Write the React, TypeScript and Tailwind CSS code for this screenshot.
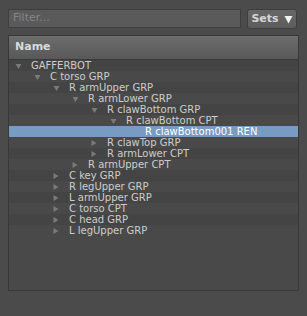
import React from "react";

type Node = { label: string; depth: number; arrow: "open" | "closed" | "none"; selected?: boolean };

const nodes: Node[] = [
  { label: "GAFFERBOT", depth: 0, arrow: "open" },
  { label: "C torso GRP", depth: 1, arrow: "open" },
  { label: "R armUpper GRP", depth: 2, arrow: "open" },
  { label: "R armLower GRP", depth: 3, arrow: "open" },
  { label: "R clawBottom GRP", depth: 4, arrow: "open" },
  { label: "R clawBottom CPT", depth: 5, arrow: "open" },
  { label: "R clawBottom001 REN", depth: 6, arrow: "none", selected: true },
  { label: "R clawTop GRP", depth: 4, arrow: "closed" },
  { label: "R armLower CPT", depth: 4, arrow: "closed" },
  { label: "R armUpper CPT", depth: 3, arrow: "closed" },
  { label: "C key GRP", depth: 2, arrow: "closed" },
  { label: "R legUpper GRP", depth: 2, arrow: "closed" },
  { label: "L armUpper GRP", depth: 2, arrow: "closed" },
  { label: "C torso CPT", depth: 2, arrow: "closed" },
  { label: "C head GRP", depth: 2, arrow: "closed" },
  { label: "L legUpper GRP", depth: 2, arrow: "closed" },
];

const Arrow = ({ kind }: { kind: Node["arrow"] }) => {
  if (kind === "none") return <span className="w-[14px] shrink-0" />;
  return (
    <span className="w-[14px] shrink-0 flex items-center">
      <svg width="8" height="8" viewBox="0 0 8 8" className="-ml-[2px]">
        {kind === "open" ? (
          <polygon points="0.5,2 6.5,2 3.5,7" fill="#7a7a7a" />
        ) : (
          <polygon points="0.5,1 5.5,4 0.5,7" fill="#7a7a7a" />
        )}
      </svg>
    </span>
  );
};

export default function App() {
  return (
    <div
      className="w-[307px] h-[316px] bg-[#4b4b4b] pt-[9px] px-[8px] text-[10px] text-[#cdcdcd]"
      style={{ fontFamily: '"DejaVu Sans", sans-serif' }}
    >
      <div className="flex gap-[6px] h-[20px]">
        <div className="w-[233px] h-[19px] bg-[#5a5a5a] border border-[#3e3e3e] flex items-center pl-[4px] text-[11px] text-[#858585]">
          Filter...
        </div>
        <div className="w-[50px] h-[20px] rounded-[3px] border border-[#3e3e3e] bg-gradient-to-b from-[#676767] to-[#5c5c5c] flex items-center justify-center gap-[5px] font-bold text-[11px] text-[#d6d6d6]">
          Sets
          <svg width="9" height="9" viewBox="0 0 9 9">
            <polygon points="0.5,1 8.5,1 4.5,8.5" fill="#f2f2f2" />
          </svg>
        </div>
      </div>
      <div className="mt-[6px] w-[291px] h-[256px] border border-[#383838] bg-[#494949] flex flex-col overflow-hidden">
        <div className="h-[24px] shrink-0 bg-gradient-to-b from-[#6d6d6d] to-[#585858] border-b border-[#3a3a3a] flex items-center pl-[6px] font-bold text-[11px] text-[#dadada]">
          Name
        </div>
        <div className="flex flex-col">
          {nodes.map((n, i) => (
            <div
              key={i}
              className={`h-[11px] flex items-center leading-[11px] whitespace-nowrap ${
                n.selected ? "bg-[#779bc2] text-white" : i % 2 === 0 ? "bg-[#444444]" : "bg-[#494949]"
              }`}
              style={{ paddingLeft: 8 + n.depth * 19 }}
            >
              <Arrow kind={n.arrow} />
              <span>{n.label}</span>
            </div>
          ))}
        </div>
      </div>
    </div>
  );
}
